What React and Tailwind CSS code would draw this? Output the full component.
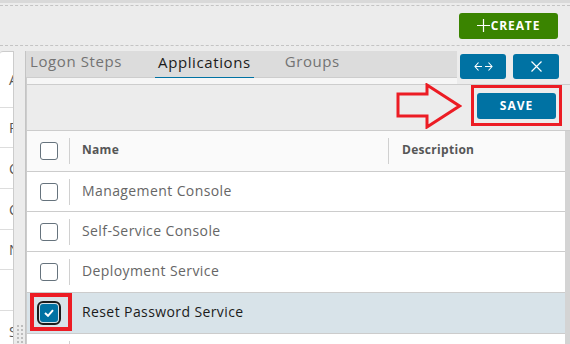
import React from 'react';

const font = { fontFamily: '"Open Sans", "Noto Sans", sans-serif' };

const rows = [
    { name: 'Management Console', h: 'h-[40px]' },
    { name: 'Self-Service Console', h: 'h-[40px]' },
    { name: 'Deployment Service', h: 'h-[41px]' },
    { name: 'Reset Password Service', h: 'h-[41px]', checked: true },
];

const sideRows = [
    { letter: 'A', h: 'h-[56px]' },
    { letter: 'R', h: 'h-[40px]' },
    { letter: 'C', h: 'h-[41px]' },
    { letter: 'C', h: 'h-[41px]' },
    { letter: 'N', h: 'h-[40px]' },
    { letter: '', h: 'h-[41px]' },
    { letter: 'S', h: 'h-[41px]' },
];

const Box = ({ checked }) =>
    checked ? (
        <div className="w-[18px] h-[18px] rounded-[3px] bg-[#0072a3] outline-2 outline-[#1b1b1b] outline-offset-1 flex items-center justify-center">
            <svg width="10" height="8" viewBox="0 0 10 8">
                <path d="M1 4 L4 6.8 L9 1.2" fill="none" stroke="#fff" strokeWidth="2" />
            </svg>
        </div>
    ) : (
        <div className="w-[18px] h-[18px] rounded-[3px] border-[1.5px] border-[#66737d] bg-white" />
    );

const Row = ({ name, h, checked }) => (
    <div className={`relative shrink-0 flex items-center ${h} border-b border-[#cccccc] ${checked ? 'bg-[#d8e3e9]' : 'bg-white'}`}>
        <div className="w-[42px] h-full flex items-center pl-[13px]">
            <Box checked={checked} />
        </div>
        <div className="w-px h-[26px] bg-[#d0d0d0]" />
        <div className={`pl-[12px] mb-[3px] text-[14px] tracking-[0.4px] ${checked ? 'text-[#1b1b1b]' : 'text-[#666666]'}`}>{name}</div>
        {checked && <div className="absolute left-[3px] top-[0px] w-[42px] h-[38px] border-[4px] border-[#ec1c24]" />}
    </div>
);

export default function App() {
    return (
        <div className="w-[570px] h-[344px] overflow-hidden bg-[#ececec] flex flex-col" style={font}>
            {/* top header band */}
            <div className="h-[3px] bg-[#d9d9d9]" />
            <div className="h-[43px] pt-[2px]">
                <div className="h-[41px] border-y border-dashed border-[#c4c4c4] flex items-center justify-end pr-[12px]">
                    <button className="h-[26px] w-[99px] rounded-[3px] bg-[#3a8400] text-white flex items-center justify-center gap-[1px]">
                        <svg width="13" height="13" viewBox="0 0 13 13">
                            <path d="M6.5 0 V13 M0 6.5 H13" stroke="#fff" strokeWidth="1.2" />
                        </svg>
                        <span className="text-[12px] font-bold tracking-[0.9px] leading-none">CREATE</span>
                    </button>
                </div>
            </div>

            <div className="flex flex-1 pt-[5px] min-h-0">
                {/* clipped side list */}
                <div className="w-[14px] bg-white border-t border-r border-[#cccccc] rounded-tl-[3px] overflow-hidden">
                    {sideRows.map((r, i) => (
                        <div key={i} className={`${r.h} border-b border-[#dddddd] flex items-center pl-[9px] text-[14px] text-[#565656] whitespace-nowrap`}>
                            {r.letter}
                        </div>
                    ))}
                </div>
                <div className="w-[12px] border-r border-[#c4c4c4] flex flex-col justify-end items-center pb-[1px]">
                    <div className="grid grid-cols-2 gap-x-[2px] gap-y-[2px]">
                        {Array.from({ length: 10 }).map((_, i) => (
                            <div key={i} className="w-[2px] h-[2px] bg-[#bdbdbd]" />
                        ))}
                    </div>
                </div>

                {/* main panel */}
                <div className="flex-1 flex flex-col min-w-0">
                    <div className="flex h-[33px] shrink-0">
                        <div className="flex-1 flex flex-col">
                            <div className="h-[27px] bg-[#dcdcdc] border-b border-[#cdcdcd] flex pl-[4px] text-[15px] tracking-[0.6px]">
                                <div className="text-[#737373] h-full flex items-center pb-[6px]">Logon Steps</div>
                                <div className="ml-[33px] h-full flex flex-col">
                                    <div className="flex-1 flex items-center pb-[3px] px-[3px] text-[#1b1b1b]">Applications</div>
                                    <div className="h-[3px] bg-[#0072a3]" />
                                </div>
                                <div className="ml-[31px] text-[#737373] h-full flex items-center pb-[6px]">Groups</div>
                            </div>
                            <div className="flex-1 bg-[#f6f6f6] border-l border-[#cdcdcd]" />
                        </div>
                        <div className="w-[113px] flex gap-[7px] pl-[3px] pt-[3px]">
                            <button className="w-[46px] h-[25px] rounded-[3px] bg-[#0072a3] flex items-center justify-center">
                                <svg width="19" height="9" viewBox="0 0 19 9">
                                    <path d="M4.5 0.5 L1 4.5 L4.5 8.5 M1 4.5 H8 M14.5 0.5 L18 4.5 L14.5 8.5 M11 4.5 H18" fill="none" stroke="#fff" strokeWidth="1.1" />
                                </svg>
                            </button>
                            <button className="w-[46px] h-[25px] rounded-[3px] bg-[#0072a3] flex items-center justify-center">
                                <svg width="11" height="11" viewBox="0 0 11 11">
                                    <path d="M0.5 0.5 L10.5 10.5 M10.5 0.5 L0.5 10.5" stroke="#fff" strokeWidth="1.2" />
                                </svg>
                            </button>
                        </div>
                    </div>

                    {/* toolbar */}
                    <div className="h-[46px] shrink-0 border-t border-l border-[#cdcdcd] bg-[#ececec] flex items-start justify-end pr-[8px]">
                        <svg width="66" height="46" viewBox="0 0 66 46" className="mt-[-2px] mr-[9px]">
                            <polygon points="2,11 31,11 31,2 63.5,23 31,44 31,33 2,33" fill="none" stroke="#ec1c24" strokeWidth="3" strokeLinejoin="miter" />
                        </svg>
                        <div className="w-[91px] h-[41px] border-[3px] border-[#ec1c24] flex items-center justify-center">
                            <button className="w-[79px] h-[26px] rounded-[3px] bg-[#0072a3] text-white text-[12px] font-bold tracking-[1px]">
                                SAVE
                            </button>
                        </div>
                    </div>

                    {/* table */}
                    <div className="flex-1 flex min-h-0 border-l border-t border-[#cccccc]">
                        <div className="flex-1 flex flex-col overflow-hidden">
                            <div className="shrink-0 flex items-center h-[41px] bg-[#fafafa] border-b border-[#cccccc] text-[12px] font-bold text-[#565656] tracking-[0.3px]">
                                <div className="w-[42px] h-full flex items-center pl-[13px]">
                                    <Box />
                                </div>
                                <div className="w-px h-[26px] bg-[#d0d0d0]" />
                                <div className="w-[318px] pl-[12px] mb-[2px]">Name</div>
                                <div className="w-px h-[26px] bg-[#d0d0d0]" />
                                <div className="pl-[13px] mb-[2px]">Description</div>
                            </div>
                            {rows.map((r) => (
                                <Row key={r.name} {...r} />
                            ))}
                            <div className="shrink-0 flex h-[20px] bg-white">
                                <div className="w-[42px]" />
                                <div className="w-px mt-[7px] bg-[#d0d0d0]" />
                            </div>
                        </div>
                        <div className="w-[5px] bg-[#d4d4d4]" />
                    </div>
                </div>
            </div>
        </div>
    );
}
